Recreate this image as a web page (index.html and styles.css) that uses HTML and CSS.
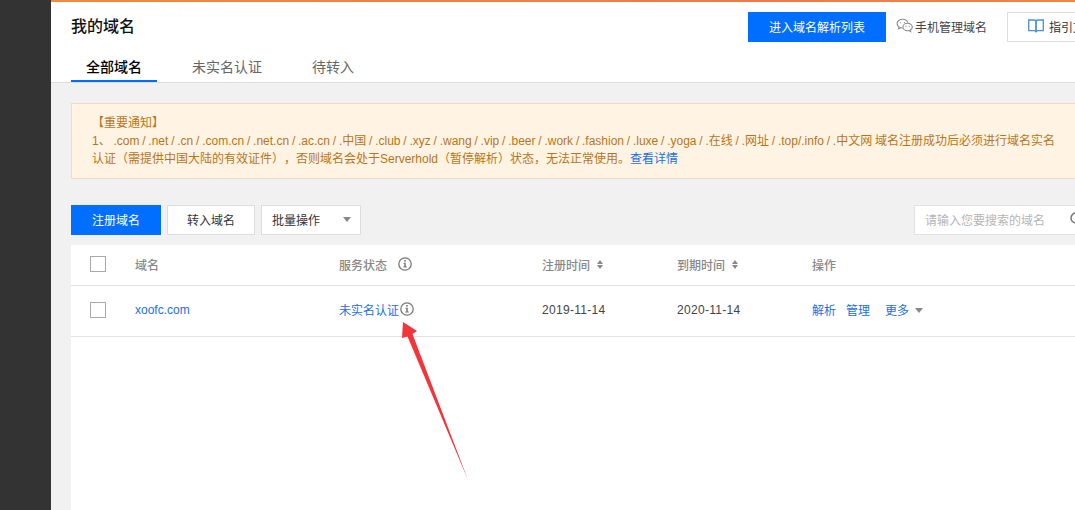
FILE: index.html
```html
<!doctype html>
<html>
<head>
    <title>我的域名</title>
    <link rel="stylesheet" href="styles.css">
</head>

<body>
    <aside class="sidebar"></aside>

    <main class="main">
        <div class="top-line"></div>

        <header class="page-header">
            <div class="title-row">
                <h2 class="page-title">我的域名</h2>
                <div class="header-actions">
                    <button class="btn btn-primary btn-dns">进入域名解析列表</button>
                    <span class="mobile-link">
                        <svg class="wechat-icon" width="18" height="16" viewBox="0 0 18 16" fill="none" stroke="#8a8a8a" stroke-width="1.1">
                            <path d="M6.6 1.2c-3 0-5.500 2-5.500 4.500 0 1.400.8 2.600 2 3.400l-.5 1.600 1.900-1c.6.2 1.200.3 1.900.3"/>
                            <path d="M6.600 1.200c2.500 0 4.700 1.400 5.300 3.400"/>
                            <path d="M11.600 5.200c-2.600 0-4.700 1.700-4.700 3.800s2.100 3.800 4.700 3.800c.5 0 1-.1 1.500-.2l1.600.9-.4-1.400c1.200-.7 2-1.800 2-3.100 0-2.100-2.100-3.800-4.700-3.800z"/>
                            <circle cx="4.600" cy="4.600" r=".6" fill="#8a8a8a" stroke="none"/>
                            <circle cx="8.400" cy="4.600" r=".6" fill="#8a8a8a" stroke="none"/>
                            <circle cx="10" cy="8.200" r=".6" fill="#8a8a8a" stroke="none"/>
                            <circle cx="13.200" cy="8.200" r=".6" fill="#8a8a8a" stroke="none"/>
                        </svg>
                        手机管理域名
                    </span>
                    <button class="btn btn-default btn-guide">
                        <svg width="16" height="14" viewBox="0 0 16 14" fill="none" stroke="#4a90d9" stroke-width="1.3">
                            <path d="M.7 1h5.200c1.200 0 2.100.7 2.100 1.800v10.400c0-.9-.9-1.500-2.100-1.500H.7z"/>
                            <path d="M15.300 1h-5.200C8.900 1 8 1.700 8 2.800v10.400c0-.9.9-1.500 2.100-1.500h5.200z"/>
                        </svg>
                        指引文档
                    </button>
                </div>
            </div>
            <nav class="tabs">
                <a class="tab tab-active">全部域名</a>
                <a class="tab">未实名认证</a>
                <a class="tab">待转入</a>
            </nav>
        </header>

        <section class="content">
            <div class="notice">
                <p>【重要通知】</p>
                <p class="notice-body">1、 .com / .net / .cn / .com.cn / .net.cn / .ac.cn / .中国 / .club / .xyz / .wang / .vip / .beer / .work / .fashion / .luxe / .yoga / .在线 / .网址 / .top/.info / .中文网 域名注册成功后必须进行域名实名认证（需提供中国大陆的有效证件），否则域名会处于Serverhold（暂停解析）状态，无法正常使用。<a class="link">查看详情</a></p>
            </div>

            <div class="toolbar">
                <button class="btn btn-primary btn-register">注册域名</button>
                <button class="btn btn-default btn-transfer">转入域名</button>
                <div class="select-box">批量操作<span class="caret"></span></div>
                <div class="search-box">
                    <span class="search-hint">请输入您要搜索的域名</span>
                    <svg width="16" height="16" viewBox="0 0 16 16" fill="none" stroke="#777" stroke-width="1.5">
                        <circle cx="7" cy="7" r="5"/>
                        <path d="M11 11l3.500 3.500"/>
                    </svg>
                </div>
            </div>

            <div class="table">
                <div class="table-row table-head">
                    <span class="check"></span>
                    <span>域名</span>
                    <span class="cell-icon">服务状态
                        <svg class="info-icon head-info" width="14" height="14" viewBox="0 0 14 14">
                            <circle cx="7" cy="7" r="6.200" fill="none" stroke="#777" stroke-width="1.300"/>
                            <rect x="6.200" y="3" width="1.600" height="1.600" fill="#777"/>
                            <path d="M5.500 5.800h2.300v3.700h1v1H5.300v-1h1V6.800h-.8z" fill="#777"/>
                        </svg>
                    </span>
                    <span class="cell-icon">注册时间<span class="sort"></span></span>
                    <span class="cell-icon">到期时间<span class="sort"></span></span>
                    <span>操作</span>
                </div>
                <div class="table-row table-data">
                    <span class="check"></span>
                    <a class="link link-domain">xoofc.com</a>
                    <span class="cell-icon cell-status"><a class="link">未实名认证</a>
                        <svg class="info-icon data-info" width="14" height="14" viewBox="0 0 14 14">
                            <circle cx="7" cy="7" r="6.200" fill="none" stroke="#777" stroke-width="1.300"/>
                            <rect x="6.200" y="3" width="1.600" height="1.600" fill="#777"/>
                            <path d="M5.500 5.800h2.300v3.700h1v1H5.300v-1h1V6.800h-.8z" fill="#777"/>
                        </svg>
                    </span>
                    <span class="cell-date">2019-11-14</span>
                    <span class="cell-date">2020-11-14</span>
                    <span class="row-actions">
                        <a class="link">解析</a>
                        <a class="link">管理</a>
                        <a class="link link-more">更多<span class="caret caret-small"></span></a>
                    </span>
                </div>
            </div>
        </section>
    </main>

    <svg class="arrow" width="1075" height="510" viewBox="0 0 1075 510">
        <polygon points="403,322 417,331 412.500,334 468,480 407.500,336.500 402,338" fill="#f5333a"/>
    </svg>
</body>
</html>
```

FILE: styles.css
```css
html, body {
    height: 100%;
    overflow: hidden;
}

body {
    font-family: "Liberation Sans", "Noto Sans CJK SC", Arial, sans-serif;
    font-size: 12px;
    margin: 0;
    display: flex;
    position: relative;
    background-color: #f1f1f1;
    color: #444;
    text-spacing-trim: space-all;
}

.sidebar {
    width: 51px;
    flex-shrink: 0;
    background-color: #333;
}

.main {
    width: 1160px;
    flex-shrink: 0;
}

.top-line {
    height: 2px;
    background: linear-gradient(to right, #f08a3c, #ee7a4a 60%, #f08a3c);
}

.page-header {
    height: 81px;
    box-sizing: border-box;
    padding: 10px 0 0 20px;
    background-color: #fff;
    border-bottom: 1px solid #ddd;
}

.title-row {
    display: flex;
    justify-content: space-between;
    align-items: center;
    height: 30px;
}

.page-title {
    margin: 0 0 4px 0;
    font-size: 16px;
    font-weight: 500;
    color: #111;
}

.header-actions {
    display: flex;
    align-items: center;
    margin-right: 72px;
}

.btn {
    height: 30px;
    padding: 0 0 2px 0;
    box-sizing: border-box;
    border: none;
    border-radius: 0;
    font-family: inherit;
    font-size: 12px;
    cursor: pointer;
}

.btn-primary {
    background-color: #006eff;
    color: #fff;
}

.btn-default {
    background-color: #fff;
    border: 1px solid #ddd;
    color: #333;
}

.btn-dns {
    width: 138px;
}

.mobile-link {
    display: flex;
    align-items: center;
    gap: 1px;
    width: 121px;
    padding: 0 0 2px 10px;
    box-sizing: border-box;
    color: #444;
}

.btn-guide {
    display: flex;
    align-items: center;
    gap: 5px;
    width: 132px;
    padding-left: 20px;
}

.tabs {
    display: flex;
    margin-top: 13px;
}

.tab {
    height: 27px;
    line-height: 24px;
    box-sizing: border-box;
    font-size: 14px;
    color: #666;
    margin-right: 50px;
}

.tab-active {
    width: 86px;
    margin-right: 35px;
    text-align: center;
    font-weight: 500;
    color: #000;
    border-bottom: 2px solid #006eff;
}

.content {
    padding: 20px 0 0 20px;
}

.notice {
    height: 76px;
    box-sizing: border-box;
    padding: 10px 20px;
    background-color: #fff4e3;
    border: 1px solid #f0dcc0;
    color: #b8741a;
    line-height: 18px;
}

.notice p {
    margin: 0;
}

.notice .notice-body {
    width: 965px;
    word-spacing: -0.55px;
}

.link {
    color: #1c6fe0;
    cursor: pointer;
}

.toolbar {
    display: flex;
    margin-top: 26px;
}

.btn-register {
    width: 90px;
}

.btn-transfer {
    width: 88px;
    margin-left: 6px;
}

.select-box {
    display: flex;
    align-items: center;
    justify-content: space-between;
    width: 100px;
    height: 30px;
    box-sizing: border-box;
    margin-left: 6px;
    padding: 0 9px 2px 10px;
    background-color: #fff;
    border: 1px solid #ddd;
    color: #333;
}

.caret {
    width: 0;
    height: 0;
    border-left: 4px solid transparent;
    border-right: 4px solid transparent;
    border-top: 5px solid #888;
}

.caret-small {
    display: inline-block;
    margin-left: 6px;
    vertical-align: 2px;
}

.search-box {
    display: flex;
    align-items: center;
    justify-content: space-between;
    width: 220px;
    height: 30px;
    box-sizing: border-box;
    margin-left: 553px;
    padding: 0 48px 2px 10px;
    background-color: #fff;
    border: 1px solid #e2e2e2;
}

.search-hint {
    color: #b5b5b5;
}

.table {
    margin-top: 10px;
    height: 265px;
    background-color: #fff;
}

.table-row {
    display: grid;
    grid-template-columns: 45px 204px 203px 135px 135px 1fr;
    align-items: center;
    padding-left: 19px;
    box-sizing: border-box;
    border-bottom: 1px solid #e2e2e2;
}

.table-head {
    height: 41px;
    padding-bottom: 2px;
    color: #888;
    font-weight: 500;
}

.table-data {
    height: 51px;
    padding-bottom: 2px;
    color: #444;
}

.check {
    width: 16px;
    height: 16px;
    box-sizing: border-box;
    border: 1px solid #aaa;
    background-color: #fff;
}

.cell-icon {
    display: flex;
    align-items: center;
}

.cell-date {
    letter-spacing: 0.3px;
}

.cell-status, .row-actions {
    padding-bottom: 2px;
}

.head-info {
    margin-left: 11px;
}

.data-info {
    margin-left: 1px;
}

.sort {
    position: relative;
    width: 8px;
    height: 9px;
    margin-left: 7px;
}

.sort:before, .sort:after {
    content: "";
    position: absolute;
    left: 0;
    border-left: 3px solid transparent;
    border-right: 3px solid transparent;
}

.sort:before {
    top: 0;
    border-bottom: 4px solid #888;
}

.sort:after {
    bottom: 0;
    border-top: 4px solid #888;
}

.row-actions {
    display: flex;
    align-items: center;
}

.row-actions .link {
    margin-right: 10px;
}

.row-actions .link-more {
    margin-left: 5px;
}

.arrow {
    position: absolute;
    top: 0;
    left: 0;
    pointer-events: none;
}
```
